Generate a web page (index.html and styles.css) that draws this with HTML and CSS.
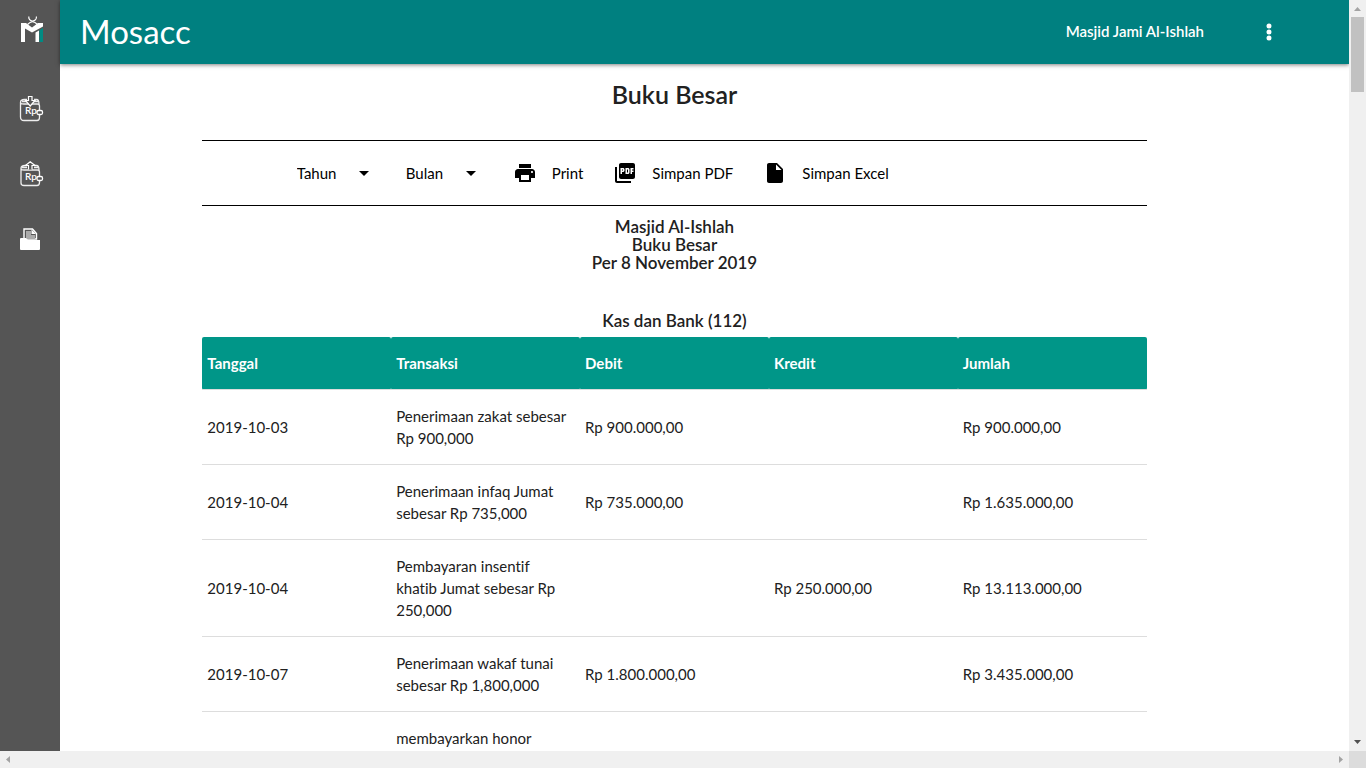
FILE: index.html
```html
<!DOCTYPE html>
<html lang="id">
<head>
<meta charset="utf-8">
<meta name="viewport" content="width=device-width, initial-scale=1">
<title>Mosacc - Buku Besar</title>
<link rel="stylesheet" href="styles.css">
</head>
<body>
<div class="frame">
  <div class="app">
    <nav class="sidebar" aria-label="Menu utama">
      <a class="sidebar-logo" href="#" aria-label="Beranda">
        <svg width="28" height="32" viewBox="16 17 28 32" aria-hidden="true">
          <path d="M28.800 17.500C28.500 20 30 22 32.500 22S37 20 36.300 17.500M27.500 25.500Q32.500 20 37.500 25.500" fill="none" stroke="#fff" stroke-width="1.200"/>
          <path d="M21 24h5l6 4.500 6-4.500h5v3.500L32 33.500l-7-4V43h-4z" fill="#fff"/>
          <path d="M35.500 33.500l3.500-2V43h-3.500z" fill="#fff"/>
          <path d="M39.500 31l3.500-2v14h-3.500z" fill="#008b83"/>
        </svg>
      </a>
      <a class="sidebar-link" href="#" aria-label="Penerimaan">
        <svg width="28" height="30" viewBox="16 14 28 30" aria-hidden="true">
          <path d="M20.500 22.500V37q0 3.500 3.500 3.500h13q2.500 0 2.500-3v-3M39.500 30v-4q0-2-2-2H24q-3.500 0-3.500-1.500 0-3 4-3h2.500M34 19.500h2.500q2.500 0 2.500 4.500M22 21.500h5M34 21.500h4" fill="none" stroke="#eee" stroke-width="1.300"/>
          <path d="M28.500 16.500h3.500v4h3l-4.800 5.500-4.700-5.500h3z" fill="#555" stroke="#fff" stroke-width="1.200"/>
          <rect x="37" y="30.500" width="5.500" height="4" rx="1.500" fill="#555" stroke="#fff" stroke-width="1.300"/>
          <text class="coin" x="25" y="34">Rp</text>
        </svg>
      </a>
      <a class="sidebar-link" href="#" aria-label="Pengeluaran">
        <svg width="28" height="30" viewBox="16 15 28 30" aria-hidden="true">
          <path d="M21 24.500V39q0 2.500 3 2.500h13q2.500 0 2.500-3v-3M39.500 32v-4q0-2-2-2H24q-3 0-3-1.500 0-3 4-3h2M34 21.500h2.500q2.500 0 2.500 4.500M22 23.500h5M34 23.500h4" fill="none" stroke="#eee" stroke-width="1.300"/>
          <path d="M28.500 25.500v-4h-3l4.700-3.800 4.800 3.800h-3v4" fill="#555" stroke="#fff" stroke-width="1.200"/>
          <rect x="37" y="32.500" width="5.500" height="4" rx="1.500" fill="#555" stroke="#fff" stroke-width="1.300"/>
          <text class="coin" x="25" y="36">Rp</text>
        </svg>
      </a>
      <a class="sidebar-link" href="#" aria-label="Laporan">
        <svg width="28" height="30" viewBox="16 15 28 30" aria-hidden="true">
          <path d="M24 30V20h8.500l4 4.500V30z" fill="#555" stroke="#fff" stroke-width="1.400"/>
          <path d="M26 22h5v4h4v4h-9z" fill="#aaa"/>
          <path d="M31.500 20.500v4.500h4.500z" fill="#fff"/>
          <path d="M21 29h5l2 2h12v9q0 1-1 1H21q-1 0-1-1V30q0-1 1-1z" fill="#fff"/>
        </svg>
      </a>
    </nav>
    <header class="topbar">
      <a class="brand" href="#">Mosacc</a>
      <span class="account">Masjid Jami Al-Ishlah</span>
      <button class="more" type="button" aria-label="Opsi">
        <svg width="24" height="24" viewBox="0 0 24 24" aria-hidden="true"><g fill="#fff"><circle cx="12" cy="6" r="2.500"/><circle cx="12" cy="12" r="2.500"/><circle cx="12" cy="18" r="2.500"/></g></svg>
      </button>
    </header>
    <main class="content">
      <div class="container">
        <h1 class="page-title">Buku Besar</h1>
        <div class="toolbar">
          <label class="picker">
            <select class="picker-select" aria-label="Tahun"><option>Tahun</option></select>
            <svg class="picker-arrow" width="24" height="24" viewBox="0 0 24 24" aria-hidden="true"><path d="M7 10l5 5 5-5z"/></svg>
          </label>
          <label class="picker">
            <select class="picker-select" aria-label="Bulan"><option>Bulan</option></select>
            <svg class="picker-arrow" width="24" height="24" viewBox="0 0 24 24" aria-hidden="true"><path d="M7 10l5 5 5-5z"/></svg>
          </label>
          <button class="action" type="button">
            <svg width="24" height="24" viewBox="0 0 24 24" aria-hidden="true"><path d="M19 8H5c-1.660 0-3 1.340-3 3v6h4v4h12v-4h4v-6c0-1.660-1.340-3-3-3zm-3 11H8v-5h8v5zm3-7c-.55 0-1-.45-1-1s.45-1 1-1 1 .45 1 1-.45 1-1 1zm-1-9H6v4h12V3z"/></svg>
            Print
          </button>
          <button class="action" type="button">
            <svg width="24" height="24" viewBox="0 0 24 24" aria-hidden="true"><path d="M20 2H8c-1.100 0-2 .9-2 2v12c0 1.100.9 2 2 2h12c1.100 0 2-.9 2-2V4c0-1.100-.9-2-2-2zm-8.500 7.500c0 .83-.67 1.500-1.500 1.500H9v2H7.500V7H10c.83 0 1.500.67 1.500 1.500v1zm5 2c0 .83-.67 1.500-1.500 1.500h-2.500V7H15c.83 0 1.500.67 1.500 1.500v3zm4-3H19v1h1.500V11H19v2h-1.500V7h3v1.500zM9 9.500h1v-1H9v1zM4 6H2v14c0 1.100.9 2 2 2h14v-2H4V6zm10 5.500h1v-3h-1v3z"/></svg>
            Simpan PDF
          </button>
          <button class="action" type="button">
            <svg width="24" height="24" viewBox="0 0 24 24" aria-hidden="true"><path d="M6 2c-1.100 0-1.990.9-1.990 2L4 20c0 1.100.89 2 1.990 2H18c1.100 0 2-.9 2-2V8l-6-6H6zm7 7V3.500L18.500 9H13z"/></svg>
            Simpan Excel
          </button>
        </div>
        <h2 class="report-title">Masjid Al-Ishlah<br>Buku Besar<br>Per 8 November 2019</h2>
        <h3 class="ledger-title">Kas dan Bank (112)</h3>
        <table class="ledger">
          <thead>
            <tr><th>Tanggal</th><th>Transaksi</th><th>Debit</th><th>Kredit</th><th>Jumlah</th></tr>
          </thead>
          <tbody>
            <tr><td>2019-10-03</td><td>Penerimaan zakat sebesar Rp 900,000</td><td>Rp 900.000,00</td><td></td><td>Rp 900.000,00</td></tr>
            <tr><td>2019-10-04</td><td>Penerimaan infaq Jumat sebesar Rp 735,000</td><td>Rp 735.000,00</td><td></td><td>Rp 1.635.000,00</td></tr>
            <tr><td>2019-10-04</td><td>Pembayaran insentif<br>khatib Jumat sebesar Rp<br>250,000</td><td></td><td>Rp 250.000,00</td><td>Rp 13.113.000,00</td></tr>
            <tr><td>2019-10-07</td><td>Penerimaan wakaf tunai sebesar Rp 1,800,000</td><td>Rp 1.800.000,00</td><td></td><td>Rp 3.435.000,00</td></tr>
            <tr><td></td><td>membayarkan honor</td><td></td><td></td><td></td></tr>
          </tbody>
        </table>
      </div>
    </main>
  </div>
  <div class="scroll scroll-y" aria-hidden="true">
    <svg width="17" height="17" viewBox="0 0 17 17"><path d="M5 11h7L8.500 7z" fill="#a3a3a3"/></svg>
    <span class="thumb"></span>
    <svg class="scroll-end" width="17" height="17" viewBox="0 0 17 17"><path d="M5 6h7l-3.500 4z" fill="#505050"/></svg>
  </div>
  <div class="scroll scroll-x" aria-hidden="true">
    <svg width="17" height="17" viewBox="0 0 17 17"><path d="M10 5v7L6 8.500z" fill="#a3a3a3"/></svg>
    <svg class="scroll-end" width="17" height="17" viewBox="0 0 17 17"><path d="M7 5v7l4-3.500z" fill="#a3a3a3"/></svg>
  </div>
  <div class="corner"></div>
</div>
</body>
</html>
```
FILE: styles.css
```css
* {
  box-sizing: border-box;
}

body {
  margin: 0;
  font-family: Lato, "Open Sans", sans-serif;
  font-size: 15px;
  line-height: 22px;
  font-variant-ligatures: none;
  color: #212121;
  background: #fff;
}

button,
select {
  margin: 0;
  padding: 0;
  border: 0;
  background: none;
  font: inherit;
  color: #000;
  cursor: pointer;
}

a {
  color: inherit;
  text-decoration: none;
}

svg {
  display: block;
  flex: none;
}

.frame {
  display: grid;
  grid-template-columns: minmax(0, 1fr) 17px;
  grid-template-rows: minmax(0, 1fr) 17px;
  height: 100vh;
}

.app {
  display: grid;
  grid-template-columns: 60px minmax(0, 1fr);
  grid-template-rows: 64px minmax(0, 1fr);
  overflow: hidden;
}

.sidebar {
  grid-row: 1 / 3;
  background: #555;
  display: flex;
  flex-direction: column;
}

.sidebar-logo,
.sidebar-link {
  display: flex;
  align-items: center;
  justify-content: center;
  height: 65px;
}

.sidebar-logo {
  height: 64px;
  margin-bottom: 12px;
}

.coin {
  font-size: 10px;
  font-weight: 600;
  fill: #fff;
}

.topbar {
  display: flex;
  align-items: center;
  padding: 0 68px 0 20px;
  background: #008080;
  color: #fff;
  box-shadow: 0 1px 4px rgba(0, 0, 0, 0.5);
}

.brand {
  margin-right: auto;
  padding-bottom: 2px;
  font-size: 33px;
  line-height: 40px;
}

.account {
  margin-right: 53px;
  padding-bottom: 2px;
  font-weight: 600;
}

.content {
  overflow: hidden;
  padding: 15px 60px 0 0;
}

.container {
  width: calc((100% + 120px) * 0.7);
  margin: 0 auto;
}

.page-title {
  margin: 0 0 31px;
  font-size: 25px;
  line-height: 30px;
  font-weight: 600;
  text-align: center;
}

.toolbar {
  display: flex;
  align-items: center;
  gap: 30px;
  height: 66px;
  padding-left: 10%;
  border: solid #000;
  border-width: 1px 0;
}

.picker {
  display: grid;
  align-items: center;
}

.picker-select,
.picker-arrow {
  grid-area: 1 / 1;
}

.picker-select {
  appearance: none;
  padding-right: 39px;
}

.picker-arrow {
  justify-self: end;
  pointer-events: none;
}

.action {
  display: flex;
  align-items: center;
  gap: 15px;
  white-space: nowrap;
}

.report-title,
.ledger-title {
  margin: 12px 0 40px;
  font-size: 17px;
  line-height: 18px;
  font-weight: 600;
  text-align: center;
}

.ledger-title {
  margin: 0 0 7px;
}

.ledger {
  width: 100%;
  table-layout: fixed;
  border-collapse: collapse;
}

.ledger tr {
  border-bottom: 1px solid #ddd;
}

.ledger th,
.ledger td {
  padding: 15px 5px;
  text-align: left;
  vertical-align: middle;
}

.ledger tr:last-child td {
  padding-bottom: 60px;
}

.ledger th {
  background: #009688;
  color: #fff;
  border-radius: 2px;
}

.scroll {
  display: flex;
  background: #f0f0f0;
}

.scroll-y {
  flex-direction: column;
}

.scroll-x {
  grid-column: 1;
}

.thumb {
  width: 13px;
  height: 10%;
  margin: 0 auto;
  background: #c1c1c1;
}

.scroll-y .scroll-end {
  margin-top: auto;
}

.scroll-x .scroll-end {
  margin-left: auto;
}

.corner {
  background: #dcdcdc;
}
```
